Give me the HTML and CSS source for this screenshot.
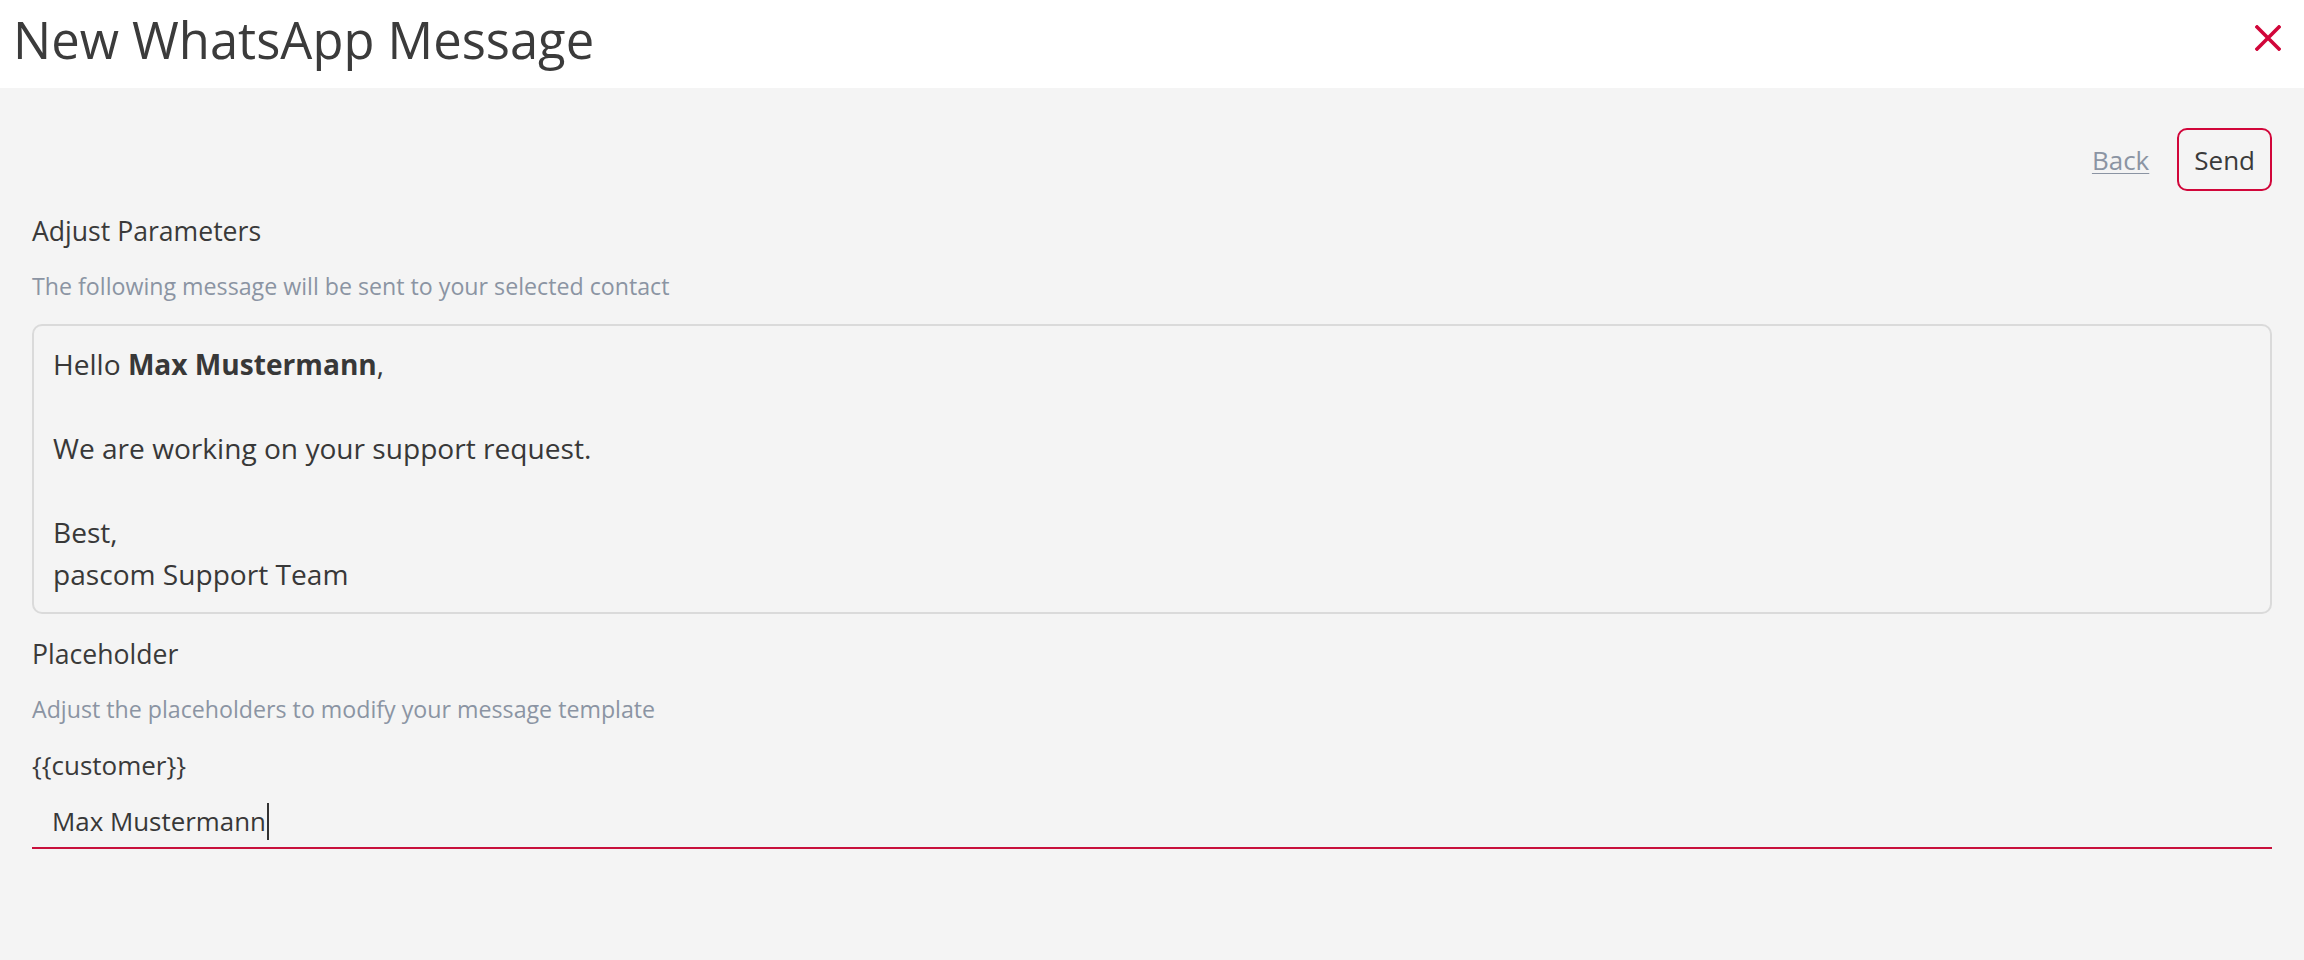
FILE: index.html
```html
<!DOCTYPE html>
<html lang="en">
<head>
<meta charset="utf-8">
<title>New WhatsApp Message</title>
<link rel="stylesheet" href="styles.css">
</head>
<body>
<header class="top-bar">
  <h1 class="title">New WhatsApp Message</h1>
  <button class="close-btn" aria-label="Close">
    <svg width="26" height="26" viewBox="0 0 26 26"><path d="M2 2 L24 24 M24 2 L2 24" stroke="#d1063a" stroke-width="3.6" stroke-linecap="square" fill="none"/></svg>
  </button>
</header>
<main class="content">
  <div class="actions">
    <a class="back-link" href="#">Back</a>
    <button class="send-btn">Send</button>
  </div>
  <h2 class="section-label label-first">Adjust Parameters</h2>
  <p class="section-hint">The following message will be sent to your selected contact</p>
  <div class="message-box">
    <div class="msg-line">Hello <strong>Max Mustermann</strong>,</div>
    <div class="msg-line">&nbsp;</div>
    <div class="msg-line">We are working on your support request.</div>
    <div class="msg-line">&nbsp;</div>
    <div class="msg-line">Best,</div>
    <div class="msg-line">pascom Support Team</div>
  </div>
  <h2 class="section-label">Placeholder</h2>
  <p class="section-hint">Adjust the placeholders to modify your message template</p>
  <div class="field-label">{{customer}}</div>
  <div class="text-input"><span class="input-value">Max Mustermann</span><span class="caret"></span></div>
</main>
</body>
</html>
```
FILE: styles.css
```css
* { box-sizing: border-box; }
html, body { margin: 0; padding: 0; }
body {
  background: #f4f4f4;
  font-family: "Open Sans", "Noto Sans", sans-serif;
  color: #3a3a3a;
  width: 2304px;
  height: 960px;
  overflow: hidden;
}
.top-bar {
  height: 88px;
  background: #ffffff;
  display: flex;
  align-items: flex-start;
  justify-content: space-between;
  padding: 5px 23px 0 13px;
}
.title {
  margin: 0;
  font-size: 50.7px;
  font-weight: 400;
  line-height: normal;
  color: #3b3b3b;
}
.close-btn {
  background: none;
  border: 0;
  padding: 0;
  margin-top: 20px;
  width: 26px;
  height: 26px;
  display: flex;
}
.content {
  padding: 0 32px;
}
.actions {
  margin-top: 40px;
  display: flex;
  justify-content: flex-end;
  align-items: center;
  gap: 28px;
}
.back-link {
  font-size: 26px;
  color: #8b94a3;
  text-decoration: underline;
  text-underline-offset: 3px;
  text-decoration-thickness: 1px;
}
.send-btn {
  font-family: inherit;
  font-size: 26px;
  color: #3a3a3a;
  background: transparent;
  border: 2px solid #d1063a;
  border-radius: 10px;
  height: 63px;
  padding: 0 15px;
  line-height: normal;
}
.section-label {
  margin: 22px 0 0;
  font-size: 26.6px;
  font-weight: 400;
  line-height: 36px;
  color: #3a3a3a;
}
.section-hint {
  margin: 21px 0 0;
  font-size: 23.2px;
  line-height: 32px;
  color: #8b94a3;
}
.message-box {
  margin-top: 22px;
  border: 2px solid #dadada;
  border-radius: 10px;
  padding: 17px 19px;
  font-size: 28.1px;
  line-height: 42px;
  color: #383838;
}
.message-box strong { font-weight: 700; }
.field-label {
  margin-top: 22px;
  font-size: 26px;
  line-height: 36px;
  color: #3a3a3a;
}
.text-input {
  margin-top: 18px;
  border-bottom: 2px solid #c8103c;
  padding: 0 0 6px 20px;
  font-size: 25.9px;
  line-height: 40px;
  height: 48px;
  display: flex;
  align-items: center;
  color: #383838;
}
.caret {
  display: inline-block;
  width: 2px;
  height: 37px;
  background: #333;
  margin-left: 1px;
}
```
